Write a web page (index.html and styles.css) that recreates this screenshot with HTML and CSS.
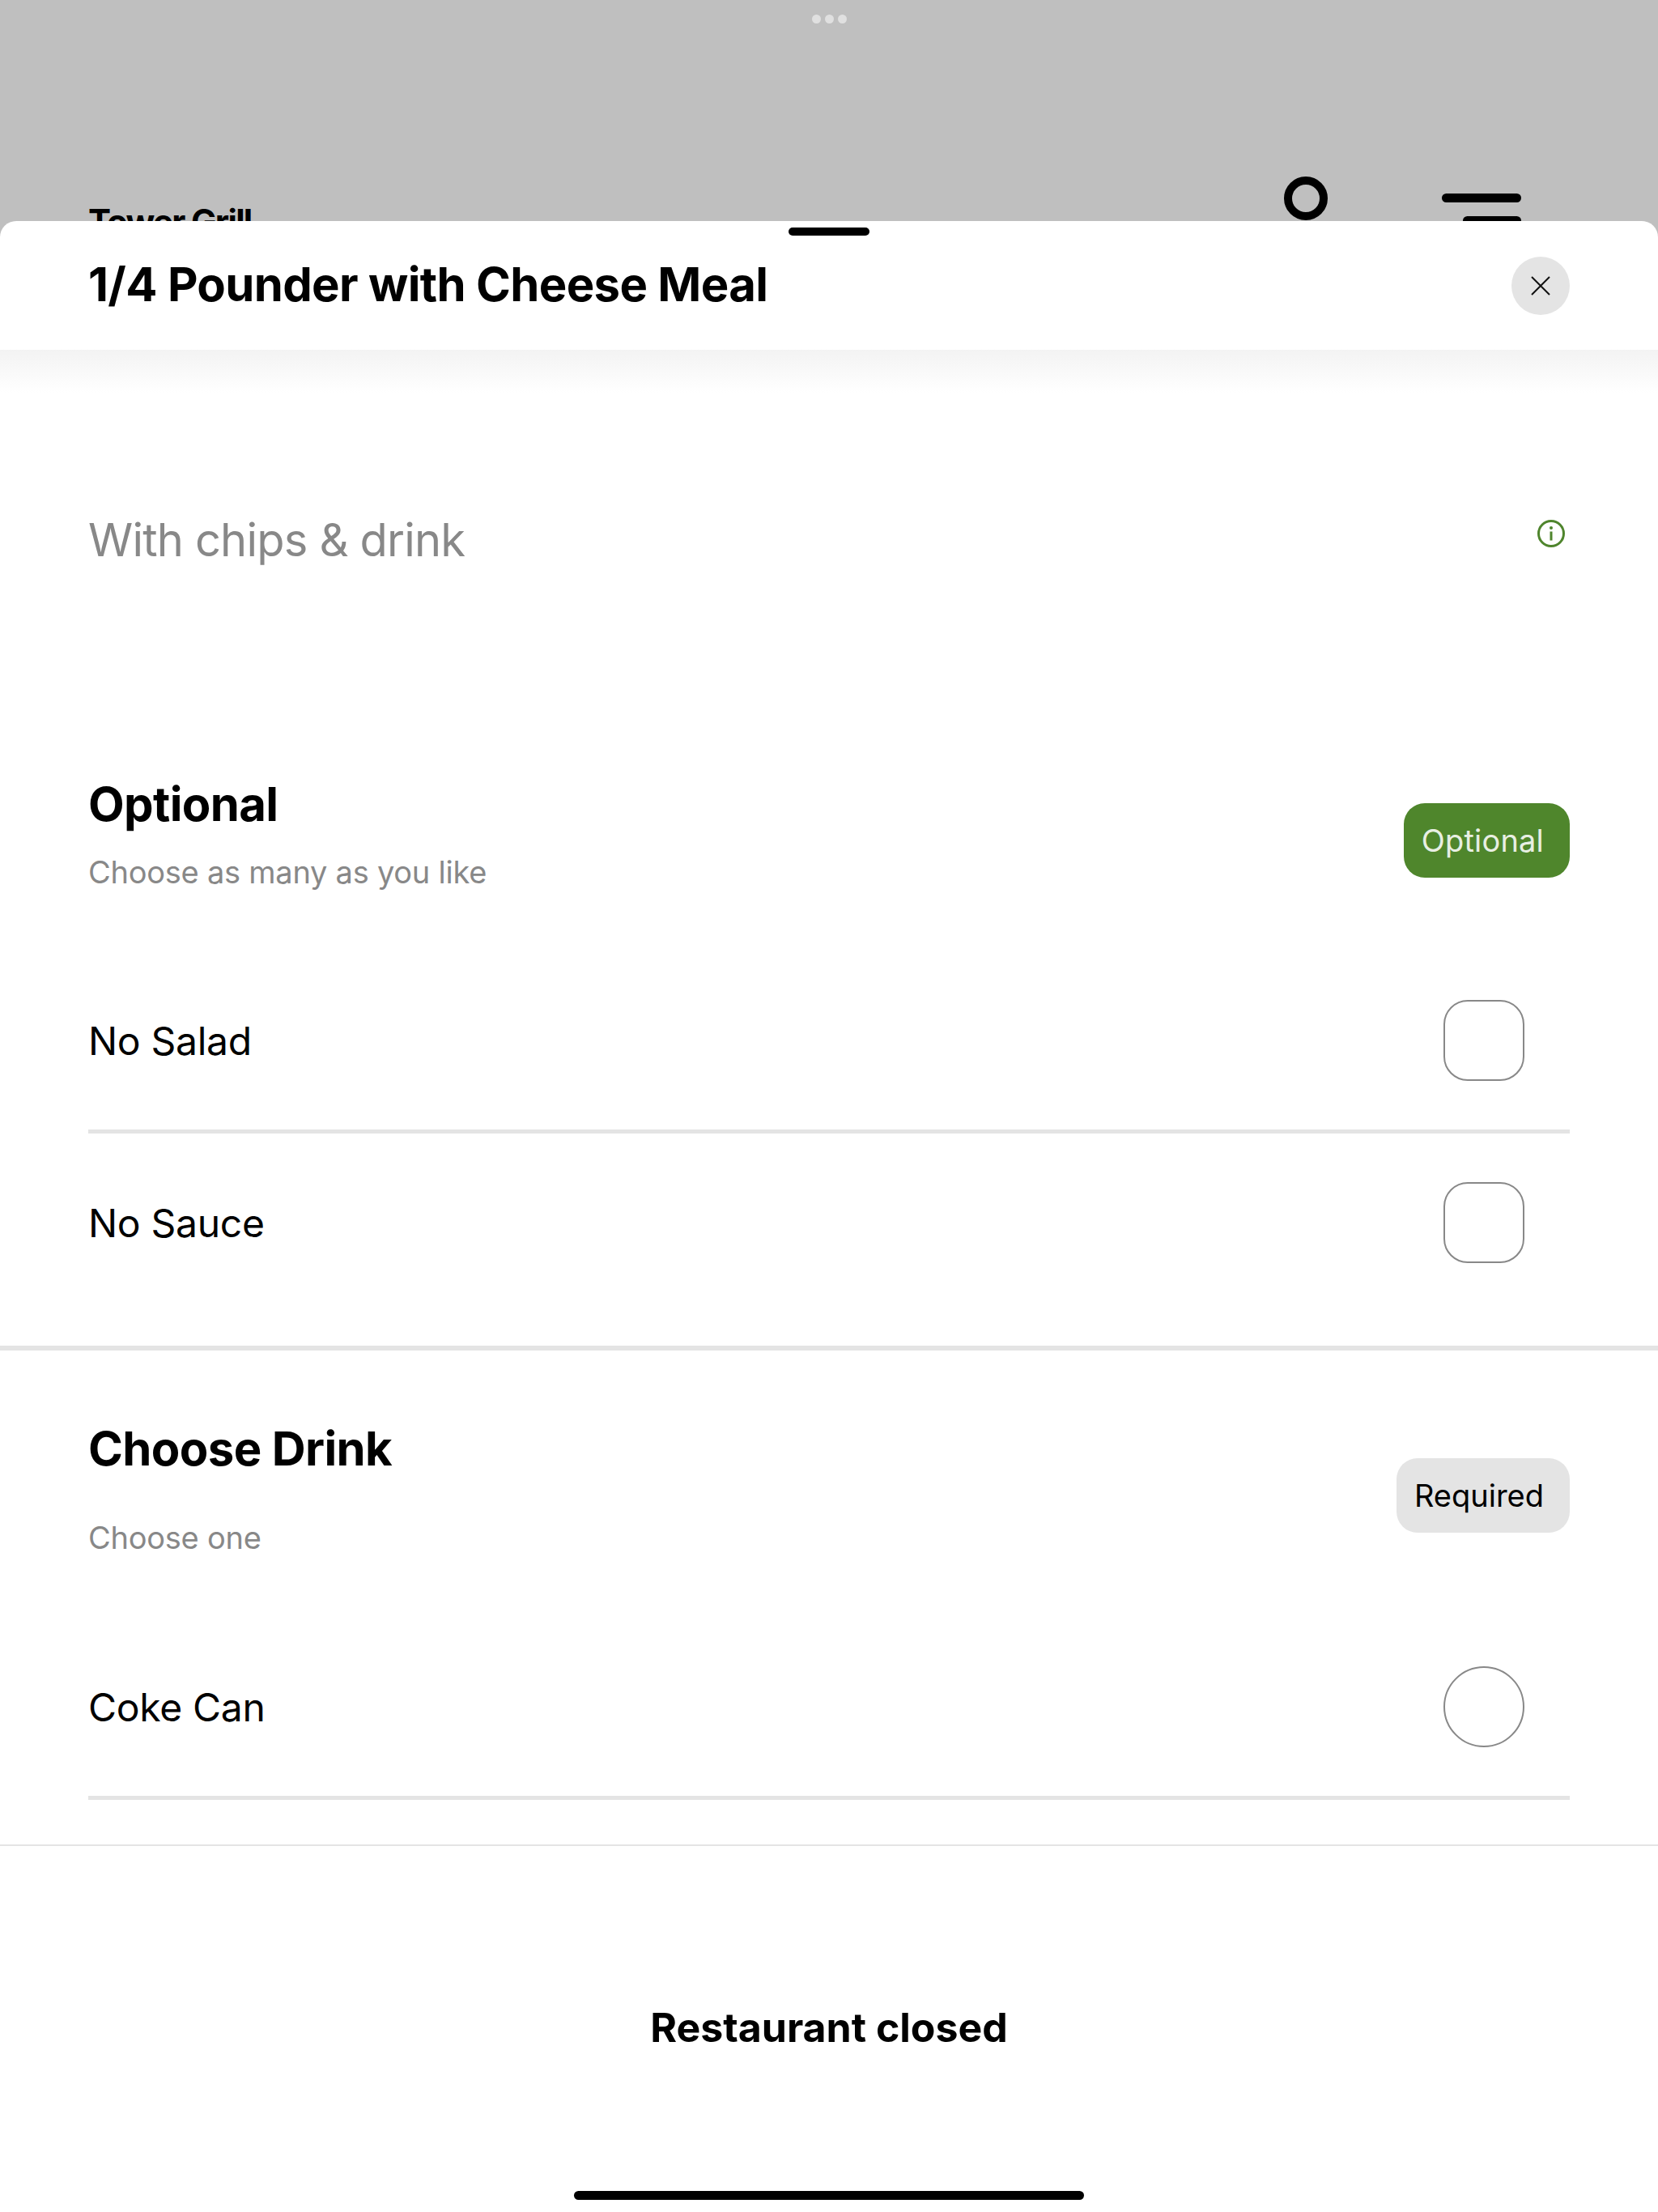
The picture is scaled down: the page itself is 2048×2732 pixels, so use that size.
FILE: index.html
```html
<!DOCTYPE html>
<html lang="en">
<head>
    <meta charset="UTF-8">
    <title>1/4 Pounder with Cheese Meal</title>
    <link rel="stylesheet" href="styles.css">
</head>
<body>
    <div class="screen">
        <div class="dots"><span></span><span></span><span></span></div>
        <div class="store-bar">
            <div class="store-name">Tower Grill</div>
            <div class="store-icons">
                <div class="ring"></div>
                <div class="menu"><span></span><span></span></div>
            </div>
        </div>

        <div class="sheet">
            <div class="handle"></div>
            <div class="sheet-head">
                <h1>1/4 Pounder with Cheese Meal</h1>
                <div class="close">
                    <svg width="24" height="24" viewBox="0 0 24 24"><path d="M1 1L23 23M23 1L1 23" stroke="#111" stroke-width="2" fill="none"/></svg>
                </div>
            </div>
            <div class="shade"></div>

            <div class="desc">
                <p>With chips &amp; drink</p>
                <svg class="info" width="34" height="34" viewBox="0 0 34 34">
                    <circle cx="17" cy="17" r="15.5" stroke="#4f852d" stroke-width="3" fill="none"/>
                    <rect x="15.5" y="14.5" width="3" height="11" fill="#4f852d"/>
                    <circle cx="17" cy="10" r="2" fill="#4f852d"/>
                </svg>
            </div>

            <section class="group group-optional">
                <div class="group-head">
                    <div>
                        <h2>Optional</h2>
                        <p>Choose as many as you like</p>
                    </div>
                    <span class="chip chip-green">Optional</span>
                </div>
                <div class="row line"><span>No Salad</span><i class="check"></i></div>
                <div class="row"><span>No Sauce</span><i class="check"></i></div>
            </section>

            <section class="group group-drink">
                <div class="group-head">
                    <div>
                        <h2>Choose Drink</h2>
                        <p>Choose one</p>
                    </div>
                    <span class="chip chip-grey">Required</span>
                </div>
                <div class="row line"><span>Coke Can</span><i class="check radio"></i></div>
            </section>

            <div class="foot">Restaurant closed</div>
            <div class="home-bar"></div>
        </div>
    </div>
</body>
</html>
```

FILE: styles.css
```css
*{
    margin: 0;
    padding: 0;
    box-sizing: border-box;
}
body{
    font-family: Inter, "Liberation Sans", sans-serif;
    color: #000;
}
.screen{
    width: 2048px;
    height: 2732px;
    background: #bfbfbf;
    position: relative;
    overflow: hidden;
}

/* page behind the sheet */
.dots{
    display: flex;
    justify-content: center;
    gap: 5px;
    padding-top: 18px;
}
.dots span{
    width: 11px;
    height: 11px;
    border-radius: 50%;
    background: #e0e0e0;
}
.store-bar{
    display: flex;
    justify-content: space-between;
    align-items: flex-start;
    padding: 189px 169px 0 109px;
}
.store-name{
    font-size: 42px;
    font-weight: 700;
    line-height: 48px;
    margin-top: 32px;
    letter-spacing: -1.7px;
}
.store-icons{
    display: flex;
    align-items: flex-start;
    gap: 141px;
}
.ring{
    width: 54px;
    height: 54px;
    border: 10px solid #000;
    border-radius: 50%;
}
.menu{
    display: flex;
    flex-direction: column;
    align-items: flex-end;
    gap: 17px;
    padding-top: 21px;
}
.menu span{
    width: 98px;
    height: 11px;
    background: #000;
    border-radius: 6px;
}
.menu span:last-child{
    width: 72px;
}

/* sheet */
.sheet{
    position: absolute;
    left: 0;
    right: 0;
    top: 273px;
    bottom: 0;
    background: #fff;
    border-radius: 20px 20px 0 0;
    display: flex;
    flex-direction: column;
}
.handle{
    position: absolute;
    left: 974px;
    top: 8px;
    width: 100px;
    height: 10px;
    background: #000;
    border-radius: 5px;
}
.sheet-head{
    height: 159px;
    padding: 0 109px;
    display: flex;
    justify-content: space-between;
    align-items: center;
}
h1{
    font-size: 58px;
    font-weight: 700;
    letter-spacing: -0.65px;
    line-height: 70px;
    margin-bottom: 3px;
}
.close{
    width: 72px;
    height: 72px;
    border-radius: 50%;
    background: #e4e4e4;
    display: flex;
    align-items: center;
    justify-content: center;
}
.shade{
    height: 53px;
    background: linear-gradient(#f3f3f3, #fff);
}
.desc{
    height: 390px;
    padding: 147px 115px 0 109px;
    display: flex;
    justify-content: space-between;
    align-items: flex-start;
}
.desc p{
    font-size: 56px;
    line-height: 70px;
    letter-spacing: -0.8px;
    color: #888;
}
.info{
    margin-top: 10px;
}

.group-head{
    display: flex;
    justify-content: space-between;
    align-items: flex-start;
    padding: 0 109px;
}
h2{
    font-size: 58px;
    font-weight: 700;
    line-height: 68px;
    letter-spacing: -0.6px;
}
.group-head p{
    font-size: 38px;
    line-height: 48px;
    letter-spacing: -0.25px;
    color: #888;
}
.group-optional{
    padding-bottom: 42px;
    border-bottom: 6px solid #e4e4e4;
}
.group-optional .group-head{
    height: 300px;
    padding-top: 84px;
}
.group-optional h2{
    margin-bottom: 26px;
}
.group-optional .chip{
    margin-top: 33px;
}
.group-drink .group-head{
    height: 330px;
    padding-top: 87px;
}
.group-drink h2{
    margin-bottom: 52px;
}
.group-drink .chip{
    margin-top: 46px;
}
.chip{
    height: 92px;
    border-radius: 26px;
    font-size: 38px;
    line-height: 92px;
    letter-spacing: 0.2px;
    padding: 0 32px 0 22px;
}
.chip-green{
    background: #4f862c;
    color: #e8efe3;
}
.chip-grey{
    background: #e4e4e4;
    letter-spacing: 0;
}
.row{
    height: 220px;
    margin: 0 109px;
    display: flex;
    justify-content: space-between;
    align-items: center;
    font-size: 48px;
    letter-spacing: -0.3px;
}
.row.line{
    height: 225px;
    border-bottom: 5px solid #e4e4e4;
}
.check{
    width: 100px;
    height: 100px;
    margin-right: 56px;
    border: 2px solid #888;
    border-radius: 30px;
}
.radio{
    border-radius: 50%;
}
.foot{
    flex: 1;
    margin-top: 55px;
    border-top: 2px solid #e4e4e4;
    text-align: center;
    font-size: 50px;
    font-weight: 700;
    line-height: 60px;
    padding-top: 194px;
}
.home-bar{
    position: absolute;
    left: 709px;
    bottom: 15px;
    width: 630px;
    height: 11px;
    background: #000;
    border-radius: 6px;
}
```
